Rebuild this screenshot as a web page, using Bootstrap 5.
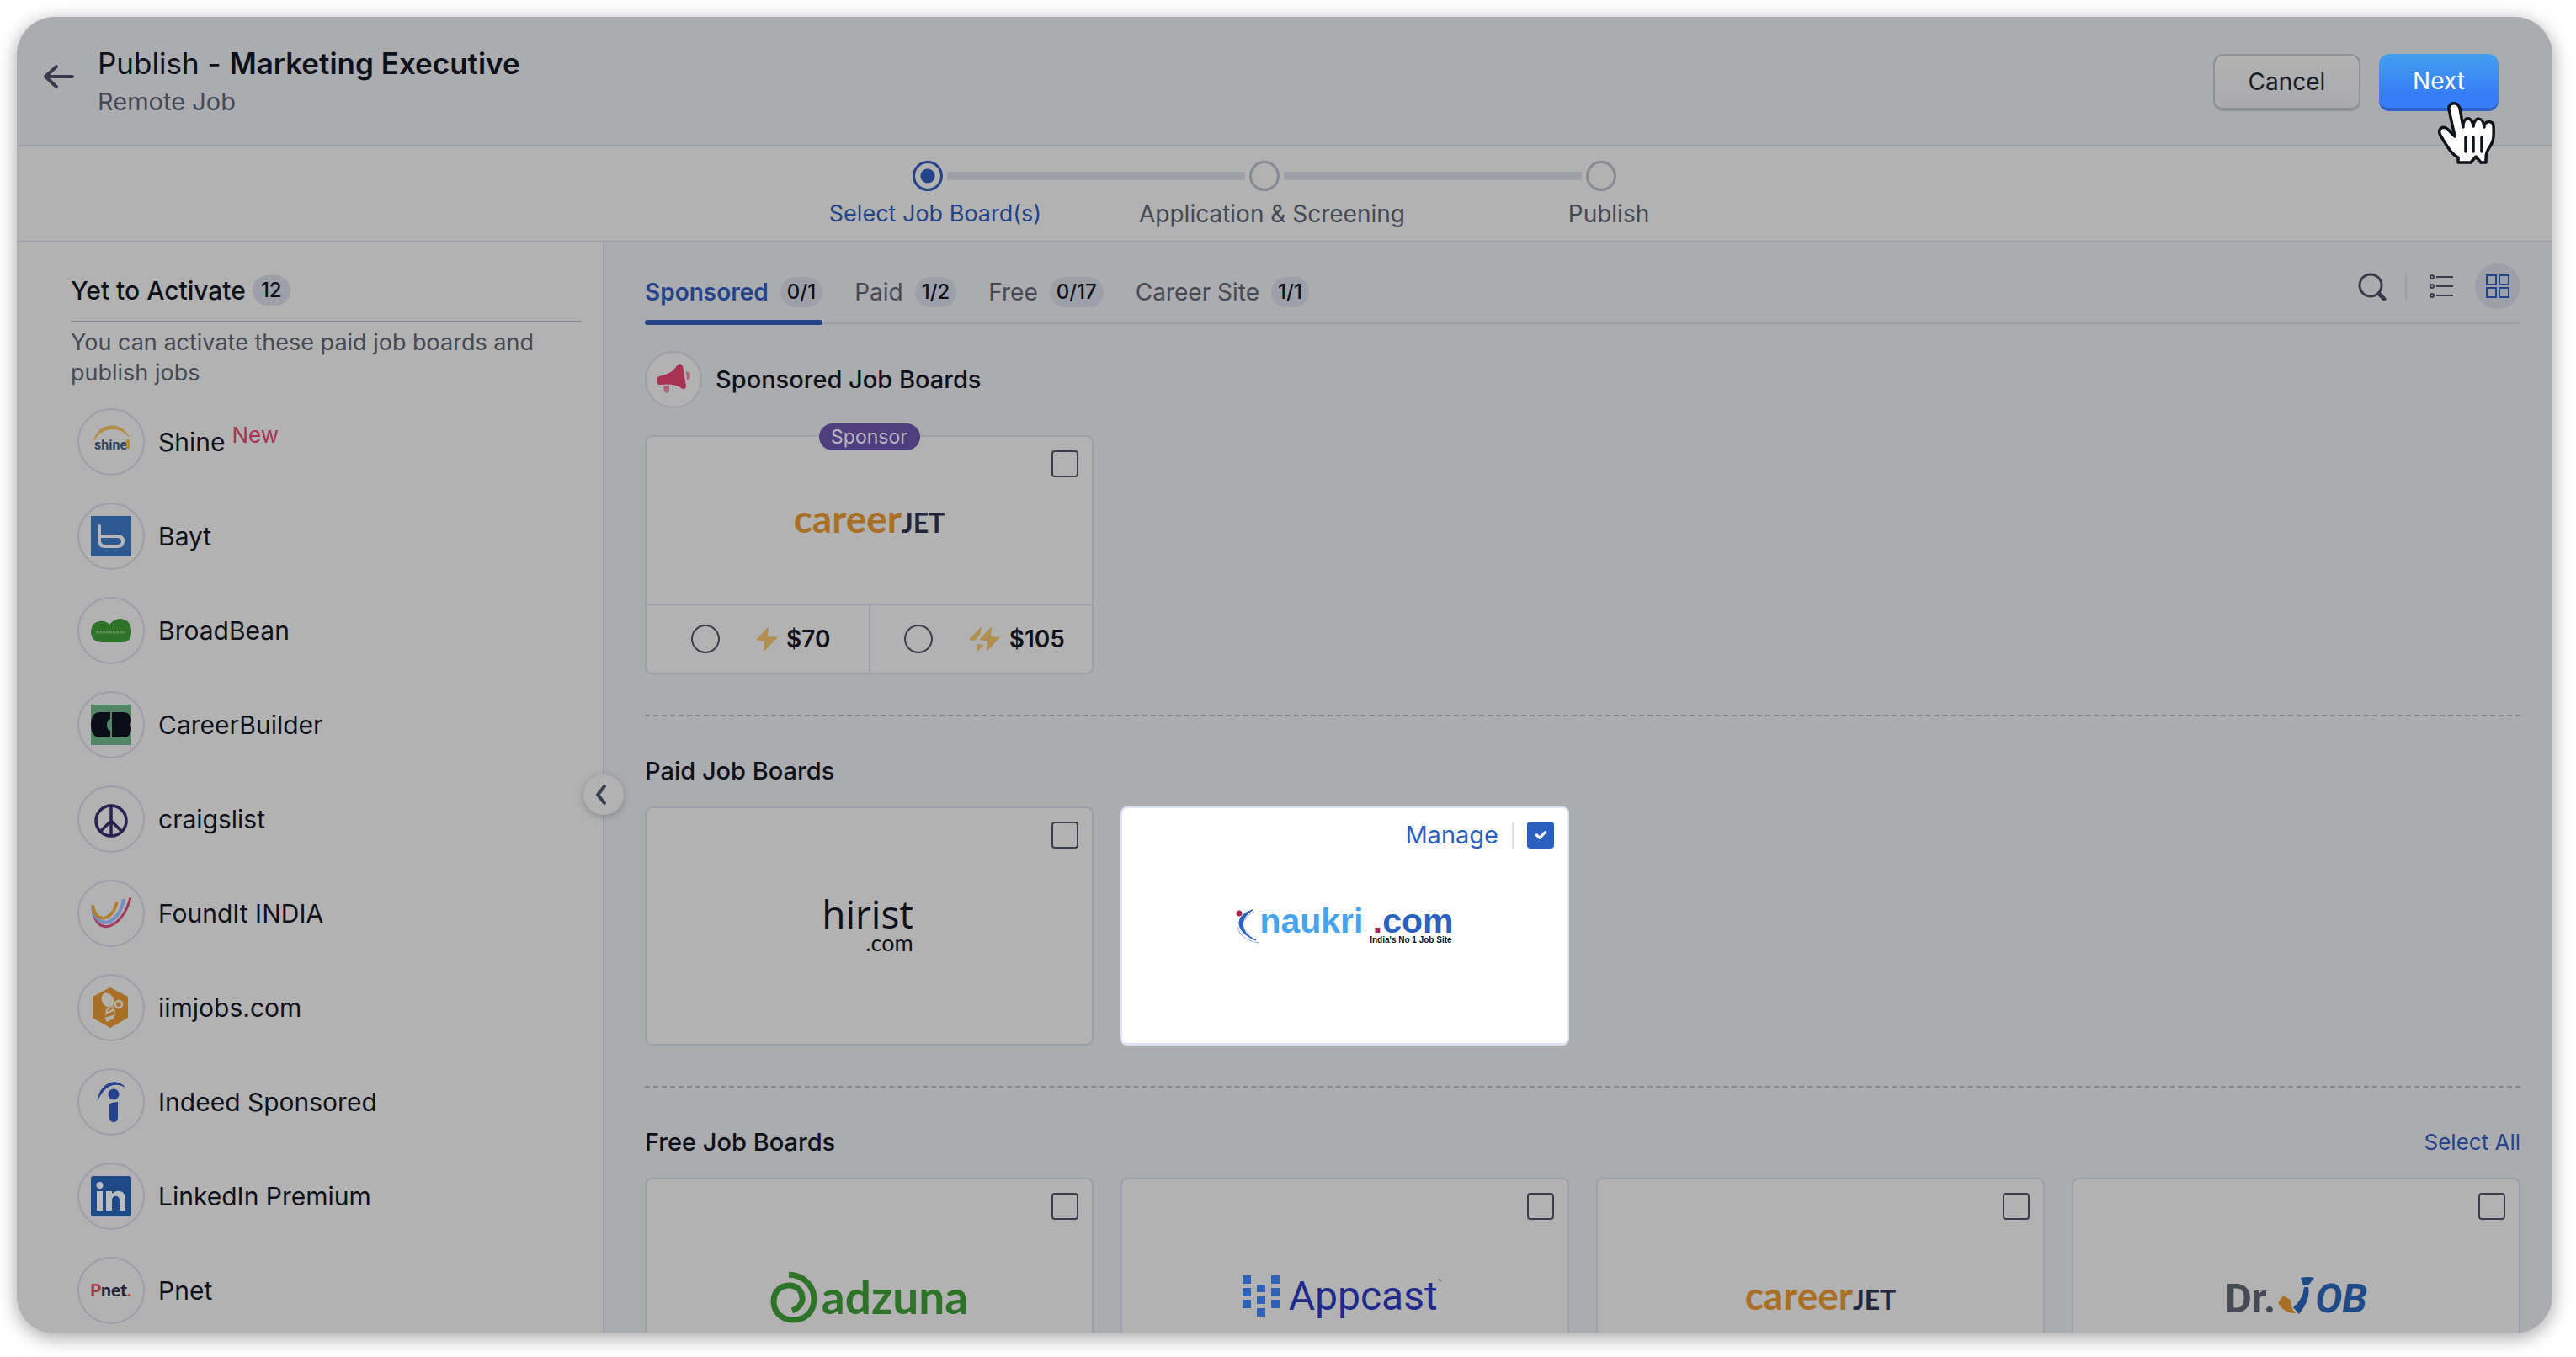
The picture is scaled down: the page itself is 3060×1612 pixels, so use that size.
<!DOCTYPE html>
<html lang="en">
<head>
<meta charset="utf-8">
<meta name="viewport" content="width=device-width, initial-scale=1">
<title>Publish - Marketing Executive</title>
<link href="https://cdn.jsdelivr.net/npm/bootstrap@5.3.0/dist/css/bootstrap.min.css" rel="stylesheet">
<style>
  :root {
    --ink: #0e1119; --muted: #454a54; --blue: #254388; --line: #9d9fa9; --paper: #b2b2b2; --canvas: #abacb0;
    --bs-body-font-family: Inter, "Liberation Sans", sans-serif;
  }
  body { background: #fff; color: var(--ink); font-size: 29px; line-height: 36px; }
  svg { display: block; flex: none; }
  button { font: inherit; }
  .shell { margin: 20px 28px 28px 20px; height: calc(100vh - 48px); border-radius: 45px; background: var(--canvas); box-shadow: 0 5px 22px rgba(0,0,0,.36); overflow: hidden; }
  .topbar { flex: none; height: 154px; padding: 4px 64px 0 30px; border-bottom: 2px solid var(--line); gap: 26px; }
  .back-link { padding-bottom: 14px; }
  .page-title { font-size: 35px; line-height: 46px; font-weight: 400; margin: 0; }
  .page-title strong { font-weight: 600; }
  .sub-title { line-height: 46px; color: var(--muted); }
  .actions { gap: 22px; }
  .btn-lg2 { height: 68px; border-radius: 12px; font-size: 28px; padding: 0; }
  .btn-cancel { width: 175px; color: #1a1d26; border: 2px solid #8f9197; border-bottom-width: 4px; background: linear-gradient(#b2b2b2, #a9aaad); }
  .btn-next { width: 142px; color: #fff; border: 0; border-bottom: 4px solid #2c62c4; background: linear-gradient(#449fee, #377df8 75%); position: relative; }
  .btn-next:hover, .btn-next:focus { color: #fff; }
  .hand { position: absolute; left: 70px; top: 57px; z-index: 5; }
  .steps { flex: none; height: 114px; background: var(--paper); border-bottom: 2px solid var(--line); padding-top: 17px; gap: 9px; }
  .track { gap: 5px; padding-right: 48px; }
  .dot { width: 36px; height: 36px; border-radius: 50%; border: 3px solid #868a91; }
  .dot.on { border-color: var(--blue); background: radial-gradient(circle, var(--blue) 8px, transparent 9px); }
  .rail { width: 354px; height: 10px; background: var(--line); }
  .step-names { padding-right: 30px; color: var(--muted); font-size: 28px; }
  .step-names li { width: 400px; text-align: center; }
  .step-names .on { color: var(--blue); font-size: 27px; }
  .side { width: 698px; flex: none; background: var(--paper); border-right: 2px solid var(--line); padding: 39px 25px 0 64px; position: relative; }
  .side-head { border-bottom: 2px solid #84888e; padding-bottom: 18px; gap: 8px; }
  .side-head h2, .sec h2 { font-size: 29px; line-height: 40px; font-weight: 500; margin: 0; }
  .side-head h2 { font-size: 30px; line-height: 36px; }
  .pill { background: var(--line); color: var(--ink); border-radius: 18px; padding: 0 8px; font-size: 24px; line-height: 36px; font-weight: 500; }
  .side-head .pill { padding: 0 10px; }
  .note { font-size: 27px; color: var(--muted); margin: 6px 0 24px; }
  .boards { gap: 32px; padding-left: 8px; font-size: 30px; }
  .boards li { gap: 16px; }
  .disc { width: 80px; height: 80px; border: 2px solid var(--line); border-radius: 50%; display: flex; align-items: center; justify-content: center; flex: none; }
  .fresh { color: #a83154; font-size: 26px; margin: -16px 0 0 -8px; }
  .fold { position: absolute; right: -25px; top: 632px; width: 48px; height: 48px; border-radius: 50%; border: 0; background: var(--paper); box-shadow: 0 2px 8px rgba(60,66,90,.35); padding: 0; z-index: 2; display: flex; align-items: center; justify-content: center; }
  .content { padding: 0 38px 0 48px; overflow: hidden; min-width: 0; }
  .tabs { height: 97px; border-bottom: 2px solid var(--line); }
  .tabset { gap: 38px; margin-bottom: -3px; }
  .tab { background: none; border: 0; border-bottom: 6px solid transparent; padding: 0 0 15px; gap: 14px; display: flex; color: var(--muted); font-size: 28px; position: relative; }
  .tab.on { color: var(--blue); font-weight: 600; }
  .tab.on::after { content: ""; position: absolute; left: 0; right: 0; bottom: -6px; height: 6px; border-radius: 3px; background: var(--blue); }
  .tools { padding-bottom: 16px; }
  .tools button { border: 0; background: none; padding: 0; }
  .tools .sep { width: 2px; height: 32px; background: var(--line); margin: 0 27px 0 22px; }
  .tools .gridv { width: 54px; height: 54px; border-radius: 50%; background: var(--line); margin-left: 26px; display: flex; align-items: center; justify-content: center; }
  .spon { margin: 32px 0; gap: 16px; }
  .spon .disc { width: 68px; height: 68px; background: var(--paper); }
  .cards { display: grid; grid-template-columns: repeat(4, 1fr); gap: 32px; }
  .tile { height: 284px; background: var(--paper); border: 2px solid var(--line); border-radius: 8px; display: flex; flex-direction: column; position: relative; }
  .tile.lit { background: #fff; border-color: #dde3f0; border-bottom-width: 3px; }
  .tile-tools { height: 48px; padding: 16px 16px 0; gap: 16px; display: flex; justify-content: flex-end; align-items: center; flex: none; }
  .tile-tools a { color: #2c60be; text-decoration: none; }
  .tile-tools .sep { width: 2px; height: 32px; background: #dde1ee; }
  .tile-logo { flex: 1; padding-bottom: 48px; display: flex; align-items: center; justify-content: center; white-space: nowrap; }
  .tile .form-check-input { width: 32px; height: 32px; margin: 0; border: 2px solid #3a3d4c; border-radius: 4px; background-color: transparent; }
  .tile .form-check-input:checked { background-color: #2c60be; border-color: #2c60be; background-size: 22px; }
  .tile .form-check-input[type=radio] { width: 34px; height: 34px; border-radius: 50%; }
  .ribbon { position: absolute; top: -16px; left: 50%; transform: translateX(-50%); width: 120px; height: 32px; line-height: 32px; border-radius: 16px; background: #4f3f7f; color: #b9b6c2; font-size: 23px; text-align: center; }
  .prices { height: 82px; border-top: 2px solid var(--line); font-weight: 600; font-size: 28px; flex: none; }
  .prices label { flex: 1 1 0; display: flex; align-items: center; justify-content: center; padding-left: 8px; }
  .prices label + label { border-left: 2px solid var(--line); }
  .prices svg { margin: 0 10px 0 43px; }
  .rule { border-top: 2px dashed #86888f; margin-top: 48px; }
  .sec { padding: 45px 0 22px; }
  .sec a { font-size: 26px; color: var(--blue); text-decoration: none; }
  .cj { font: 700 46px/50px Lato, sans-serif; color: #a86f26; }
  .cj span { font-size: 32px; color: #23263a; }
  .hirist { font: 400 46px/42px "Open Sans", sans-serif; text-align: right; padding: 0 4px 2px 0; }
  .hirist span { display: block; font: 400 27px/28px Lato, sans-serif; }
  .nk { font: 700 41px/34px "Liberation Sans", sans-serif; color: #48a3ee; }
  .nk .dotcom { color: #2c60be; }
  .nk .dotcom b { color: #a02c50; }
  .nk .tag { font-size: 10px; line-height: 12px; color: #0e1119; text-align: right; padding-right: 2px; }
  .adz { font: 700 55px/60px Lato, sans-serif; color: #2f732b; gap: 5px; }
  .app { font: 400 48px/60px Roboto, sans-serif; color: #1f2a8a; gap: 11px; padding: 0 6px 2px 0; }
  .app sup { font-size: 9px; top: -30px; color: #555b8a; }
  .drj { font: 700 49px/54px Roboto, sans-serif; color: #464a54; padding-top: 4px; }
  .drj svg { margin: 0 0 0 3px; }
  .drj em { color: #1f4a87; font-size: 48px; }
</style>
<script src="https://cdn.jsdelivr.net/npm/bootstrap@5.3.0/dist/js/bootstrap.bundle.min.js"></script>
</head>
<body>
<div class="shell d-flex flex-column">
  <header class="topbar d-flex align-items-center">
    <a href="#" class="back-link" aria-label="Back">
      <svg width="40" height="36" viewBox="0 0 40 36" fill="none" stroke="#3a3a4a" stroke-width="4" stroke-linecap="round" stroke-linejoin="round"><path d="M36 18H4M17 6L4 18l13 12"/></svg>
    </a>
    <div class="me-auto">
      <h1 class="page-title">Publish - <strong>Marketing Executive</strong></h1>
      <div class="sub-title">Remote Job</div>
    </div>
    <div class="actions d-flex">
      <button type="button" class="btn btn-lg2 btn-cancel">Cancel</button>
      <button type="button" class="btn btn-lg2 btn-next">Next
        <svg class="hand" width="70" height="76" viewBox="0 0 70 76" fill="#fff" stroke="#0d1118" stroke-width="3.5" stroke-linejoin="round" stroke-linecap="round"><path d="M13 9C12 0 24-1 26 8L30 30C29 17 41 16 42 29C43 17 54 17 55 30C54 22 66 21 66 29C67 46 65 48 60 56C57 61 57 64 57 72H51L45 65L39 72H24V66C16 62 13 56 3 40C-1 32 6 27 12 33L20 41Z"/><path d="M33 42V59M42 42V59M52 42V59"/></svg>
      </button>
    </div>
  </header>

  <nav class="steps d-flex flex-column" aria-label="Progress">
    <div class="track d-flex justify-content-center align-items-center">
      <span class="dot on"></span><span class="rail"></span><span class="dot"></span><span class="rail"></span><span class="dot"></span>
    </div>
    <ol class="step-names list-unstyled d-flex justify-content-center mb-0">
      <li class="on">Select Job Board(s)</li><li>Application &amp; Screening</li><li>Publish</li>
    </ol>
  </nav>

  <div class="d-flex flex-fill overflow-hidden">
    <aside class="side">
      <div class="side-head d-flex align-items-center"><h2>Yet to Activate</h2><span class="pill">12</span></div>
      <p class="note">You can activate these paid job boards and publish jobs</p>
      <ul class="boards list-unstyled d-flex flex-column mb-0">
        <li class="d-flex align-items-center"><span class="disc"><svg width="48" height="48" viewBox="0 0 48 48"><path d="M4 22C8 0 38 0 45 18C36 5 12 5 4 22Z" fill="#b39049" stroke="#b39049"/><text x="4" y="33" font-family="Roboto" font-weight="700" font-size="16" fill="#2f4264">shine</text><rect x="42" y="21" width="4" height="11" fill="#b08a35"/></svg></span><span>Shine</span><span class="fresh">New</span></li>
        <li class="d-flex align-items-center"><span class="disc"><svg width="48" height="48" viewBox="0 0 48 48"><rect width="48" height="48" fill="#2d5990"/><path d="M10 12V29Q10 36 17 36H31Q38 36 38 30T31 24H11" fill="none" stroke="#b5b7bb" stroke-width="4" stroke-linecap="round"/></svg></span><span>Bayt</span></li>
        <li class="d-flex align-items-center"><span class="disc"><svg width="48" height="48" viewBox="0 0 48 48"><path d="M10 13Q18 12 22 17Q28 9 36 10Q48 12 48 25Q48 38 38 38H12Q0 37 0 25Q1 14 10 13Z" fill="#2f732b"/><path d="M6 26H42" stroke="#5c9158" stroke-width="3" stroke-dasharray="3 1"/></svg></span><span>BroadBean</span></li>
        <li class="d-flex align-items-center"><span class="disc"><svg width="48" height="48" viewBox="0 0 48 48"><rect width="48" height="48" fill="#528667"/><path d="M10 9H23V17Q19 18 19 24T23 31V39H10Q0 38 0 24T10 9ZM25 9H40Q48 10 48 20Q46 24 48 28Q48 38 40 39H25Z" fill="#0c0e17"/></svg></span><span>CareerBuilder</span></li>
        <li class="d-flex align-items-center"><span class="disc"><svg width="48" height="48" viewBox="0 0 48 48" fill="none" stroke="#28204f" stroke-width="3.5"><circle cx="24" cy="26" r="18"/><path d="M24 8V44M24 26L11 39M24 26L37 39"/></svg></span><span>craigslist</span></li>
        <li class="d-flex align-items-center"><span class="disc"><svg width="48" height="48" viewBox="0 0 48 48" fill="none" stroke-width="4"><path d="M2 18C6 54 38 42 47 5" stroke="#a33a5f" stroke-width="3"/><path d="M2 16C6 46 34 38 39 7" stroke="#758fc2"/><path d="M2 14C5 37 26 34 31 10" stroke="#b27c2b" stroke-width="3.5"/></svg></span><span>FoundIt INDIA</span></li>
        <li class="d-flex align-items-center"><span class="disc"><svg width="48" height="48" viewBox="0 0 48 48"><path d="M23 0L44 11V36L23 48L2 36V11Z" fill="#a86f26"/><g fill="#b5b1a8"><ellipse cx="20" cy="15" rx="7" ry="9" transform="rotate(-30 20 15)"/><path d="M18 26L27 22L29 30L17 34ZM16 36L29 32L27 37L19 41Z"/></g><circle cx="33" cy="20" r="4" fill="none" stroke="#b5b1a8" stroke-width="2.5"/><path d="M26 24l-6 4M28 29l-10 4" stroke="#a86f26" stroke-width="2"/></svg></span><span>iimjobs.com</span></li>
        <li class="d-flex align-items-center"><span class="disc"><svg width="48" height="48" viewBox="0 0 48 48"><circle cx="27" cy="15" r="6.5" fill="#26428f"/><path d="M22 26Q27 24 32 24V44Q31 48 27 48T22 44Z" fill="#26428f"/><path d="M8 22C11 2 29-5 40 6C27-1 15 6 8 22Z" fill="#26428f" stroke="#26428f"/></svg></span><span>Indeed Sponsored</span></li>
        <li class="d-flex align-items-center"><span class="disc"><svg width="48" height="48" viewBox="0 0 48 48"><rect width="48" height="48" rx="3" fill="#1f4a87"/><g fill="#b9bcc0"><circle cx="10.500" cy="11" r="4"/><rect x="7" y="18" width="7" height="23"/><path d="M18 18H25V21C31 15 41 17 41 27V41H34V29C34 22 25 22 25 29V41H18Z"/></g></svg></span><span>LinkedIn Premium</span></li>
        <li class="d-flex align-items-center"><span class="disc"><svg width="50" height="48" viewBox="0 0 50 48" font-family="Lato" font-weight="900" font-size="21"><text x="0" y="31" fill="#23263a"><tspan fill="#a83a48">P</tspan>net<tspan fill="#b5553a">.</tspan></text></svg></span><span>Pnet</span></li>
      </ul>
      <button type="button" class="fold" aria-label="Collapse"><svg width="20" height="28" viewBox="0 0 20 28" fill="none" stroke="#3a3f50" stroke-width="4" stroke-linecap="round" stroke-linejoin="round"><path d="M11 4L3 14l8 10"/></svg></button>
    </aside>

    <main class="content flex-fill">
      <div class="tabs d-flex justify-content-between align-items-end">
        <div class="tabset d-flex" role="tablist">
          <button class="tab on" role="tab" aria-selected="true"><span>Sponsored</span><span class="pill">0/1</span></button>
          <button class="tab" role="tab"><span>Paid</span><span class="pill">1/2</span></button>
          <button class="tab" role="tab"><span>Free</span><span class="pill">0/17</span></button>
          <button class="tab" role="tab"><span>Career Site</span><span class="pill">1/1</span></button>
        </div>
        <div class="tools d-flex align-items-center">
          <button type="button" aria-label="Search"><svg width="34" height="34" viewBox="0 0 34 34" fill="none" stroke="#3a3a4a" stroke-width="3"><circle cx="15" cy="16" r="13"/><path d="M25 26l6 6" stroke-width="5" stroke-linecap="round"/></svg></button>
          <span class="sep"></span>
          <button type="button" aria-label="List view"><svg width="28" height="30" viewBox="0 0 28 30" fill="none" stroke="#3a3a4a" stroke-width="2"><circle cx="3" cy="4" r="2"/><circle cx="3" cy="15" r="2"/><circle cx="3" cy="26" r="2"/><path d="M8 4H28M8 15H28M8 26H28"/></svg></button>
          <button type="button" class="gridv" aria-label="Grid view"><svg width="28" height="28" viewBox="0 0 28 28" fill="none" stroke="#254388" stroke-width="2"><path d="M1 1H12V12H1ZM16 1H27V12H16ZM1 16H12V27H1ZM16 16H27V27H16Z"/></svg></button>
        </div>
      </div>

      <div class="spon d-flex align-items-center sec p-0">
        <span class="disc"><svg width="68" height="68" viewBox="0 0 68 68" fill="#a83154"><path d="M14 33Q14 31 17 30Q32 27 37 19Q42 12 45 18L49 42Q48 47 43 44Q36 38 18 40Q15 40 15 38Z"/><path d="M49 24Q54 25 54 29T50 35Z" opacity=".6"/><path d="M22 41H29V48Q26 52 23 48Z" opacity=".6"/></svg></span>
        <h2>Sponsored Job Boards</h2>
      </div>
      <div class="cards">
        <div class="tile">
          <span class="ribbon">Sponsor</span>
          <div class="tile-tools"><input class="form-check-input" type="checkbox" aria-label="Careerjet sponsored"></div>
          <div class="tile-logo"><div class="cj">career<span>JET</span></div></div>
          <div class="prices d-flex">
            <label><input class="form-check-input" type="radio" name="plan"><svg width="26" height="30" viewBox="0 0 26 30" fill="#b08f50"><path d="M15 0L0 16L10 18L9 30L26 13L14 12Z"/></svg>$70</label>
            <label><input class="form-check-input" type="radio" name="plan"><svg width="38" height="30" viewBox="0 0 38 30" fill="#b08f50"><path d="M27 0L12 16L22 18L21 30L37 13L26 12ZM15 0L0 16L7 17L13 10ZM10 21L18 22L10 30Z"/></svg>$105</label>
          </div>
        </div>
      </div>

      <div class="rule"></div>
      <div class="sec"><h2>Paid Job Boards</h2></div>
      <div class="cards">
        <div class="tile">
          <div class="tile-tools"><input class="form-check-input" type="checkbox" aria-label="hirist.com"></div>
          <div class="tile-logo"><div class="hirist">hirist<span>.com</span></div></div>
        </div>
        <div class="tile lit">
          <div class="tile-tools"><a href="#">Manage</a><span class="sep"></span><input class="form-check-input" type="checkbox" checked aria-label="naukri.com"></div>
          <div class="tile-logo">
            <svg width="28" height="42" viewBox="0 0 28 42"><circle cx="4" cy="6" r="3.500" fill="#a02c50"/><path d="M20 2C-2 8-2 28 24 38C4 28 4 12 20 2Z" fill="#2c60be" stroke="#2c60be"/><path d="M2 22C4 32 12 39 28 41M11 14Q14 7 22 4" fill="none" stroke="#8fb0e0"/></svg>
            <div class="nk"><div>naukri <span class="dotcom"><b>.</b>com</span></div><div class="tag">India's No 1 Job Site</div></div>
          </div>
        </div>
      </div>

      <div class="rule"></div>
      <div class="sec d-flex justify-content-between align-items-center"><h2>Free Job Boards</h2><a href="#">Select All</a></div>
      <div class="cards">
        <div class="tile">
          <div class="tile-tools"><input class="form-check-input" type="checkbox" aria-label="Adzuna"></div>
          <div class="tile-logo"><div class="adz d-flex"><svg width="56" height="62" viewBox="0 0 56 62" fill="none" stroke="#2f732b" stroke-width="7"><path d="M22 4C42 5 52 20 52 33C52 50 40 58 27 58C12 58 4 47 4 36C4 23 14 16 24 17C34 18 39 26 38 35Q36 43 26 47"/></svg><span>adzuna</span></div></div>
        </div>
        <div class="tile">
          <div class="tile-tools"><input class="form-check-input" type="checkbox" aria-label="Appcast"></div>
          <div class="tile-logo"><div class="app d-flex align-items-center"><svg width="44" height="50" viewBox="0 0 44 50" fill="#2f62b5"><path d="M0 0H10V10H0ZM0 15H10V25H0ZM0 29H10V39H0ZM34 0H44V10H34ZM34 15H44V25H34ZM34 29H44V39H34ZM17 11H27V20H17ZM17 25H27V34H17ZM17 39H27V49H17Z"/></svg><span>Appcast<sup>™</sup></span></div></div>
        </div>
        <div class="tile">
          <div class="tile-tools"><input class="form-check-input" type="checkbox" aria-label="Careerjet"></div>
          <div class="tile-logo"><div class="cj">career<span>JET</span></div></div>
        </div>
        <div class="tile">
          <div class="tile-tools"><input class="form-check-input" type="checkbox" aria-label="Dr. Job"></div>
          <div class="tile-logo"><div class="drj d-flex"><span>Dr.</span><svg width="44" height="46" viewBox="0 0 44 46"><path d="M0 32L6 23L15 28Q15 38 21 44Q8 45 0 32Z" fill="#a86f26"/><path d="M27 2Q35 0 43 2L36 11H30ZM31 13H36Q39 28 25 45L18 37Q30 27 31 13Z" fill="#1f4a87"/></svg><em>OB</em></div></div>
        </div>
      </div>
    </main>
  </div>
</div>
</body>
</html>
